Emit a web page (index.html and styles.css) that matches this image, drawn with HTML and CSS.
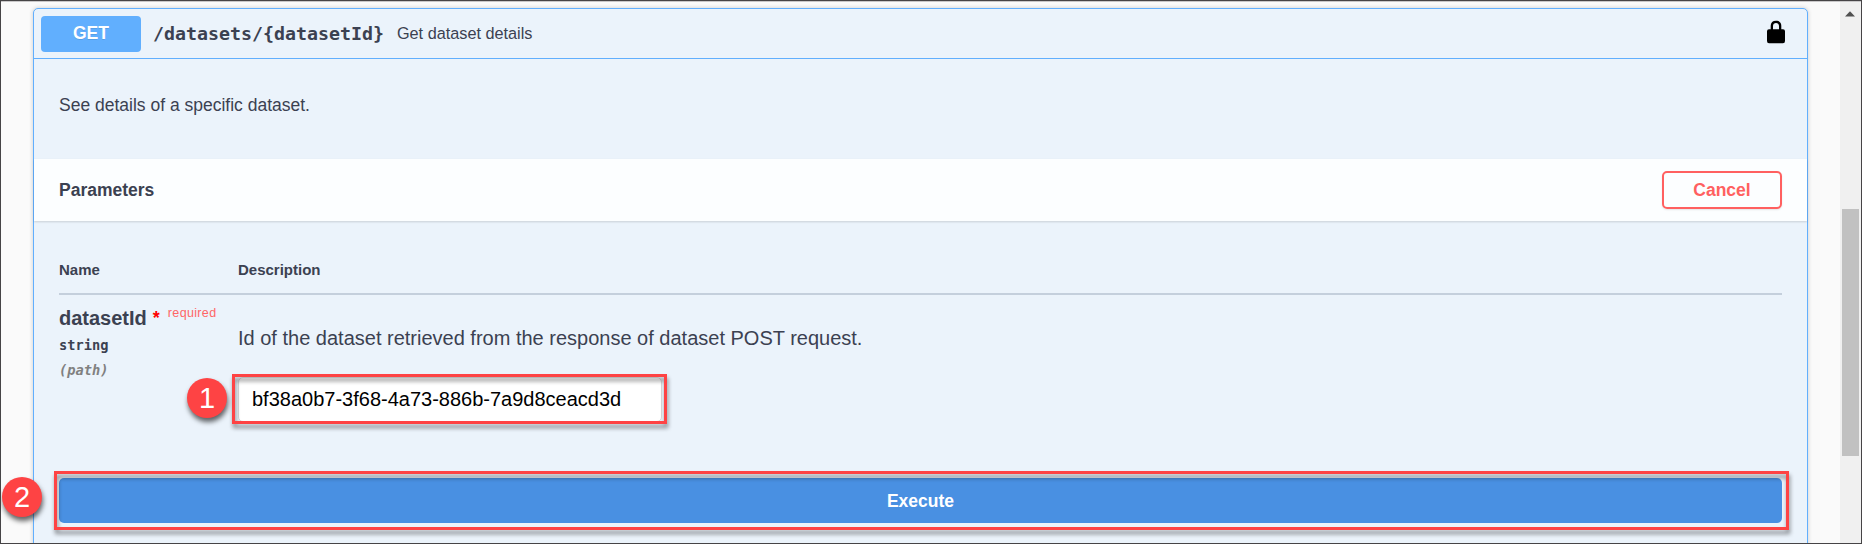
FILE: index.html
```html
<!DOCTYPE html>
<html lang="en">
<head>
<meta charset="utf-8">
<title>Get dataset details</title>
<link rel="stylesheet" href="styles.css">
</head>
<body>
<div class="window">
  <main class="content">
    <section class="opblock">
      <header class="summary">
        <span class="method">GET</span>
        <span class="path">/datasets/{datasetId}</span>
        <span class="summary-text">Get dataset details</span>
        <svg class="lock" width="20" height="24" viewBox="0 0 20 24"><path d="M1 11.2Q1 9.3 3 9.3H4.700V5.800C4.700 2.500 6.700 .700 10 .700S15.300 2.500 15.300 5.800V9.300H17Q19 9.300 19 11.200V21Q19 23.200 17 23.200H3Q1 23.200 1 21ZM7 9.300H13V6C13 4 11.700 3 10 3S7 4 7 6Z"/></svg>
      </header>
      <p class="description">See details of a specific dataset.</p>
      <div class="section-header">
        <h4 class="section-title">Parameters</h4>
        <button class="cancel">Cancel</button>
      </div>
      <div class="parameters">
        <div class="row head"><span>Name</span><span>Description</span></div>
        <div class="row">
          <div class="param">
            <div class="param-name">datasetId<span class="star">*</span><span class="required">required</span></div>
            <div class="param-type">string</div>
            <div class="param-in">(path)</div>
          </div>
          <div class="param-desc">
            <p class="param-text">Id of the dataset retrieved from the response of dataset POST request.</p>
            <div class="field">
              <div class="input">bf38a0b7-3f68-4a73-886b-7a9d8ceacd3d</div>
              <span class="outline outline-field"></span>
              <span class="badge badge-one">1</span>
            </div>
          </div>
        </div>
      </div>
      <div class="execute-wrap">
        <button class="execute">Execute</button>
        <span class="outline outline-execute"></span>
        <span class="badge badge-two">2</span>
      </div>
    </section>
  </main>
  <aside class="scrollbar">
    <svg class="arrow" width="10" height="6" viewBox="0 0 10 6"><path d="M0 5.500L5 .300L10 5.500Z"/></svg>
    <div class="thumb"></div>
  </aside>
</div>
</body>
</html>
```
FILE: styles.css
```css
* { box-sizing: border-box; }
body { margin: 0; font-family: "Liberation Sans", Arial, sans-serif; color: #3b4151; }
.window { display: flex; width: 1862px; height: 544px; border: 1px solid #464446; background: #fafafa; overflow: hidden; box-shadow: inset 0 1px 0 #c9c8c9; }
.content { flex: 1; padding: 7px 32px 0; }
.opblock { height: 600px; border: 1px solid #61affe; border-radius: 5px; background: #ebf3fb; box-shadow: 0 0 4px rgba(0,0,0,.19); }
.summary { display: flex; align-items: center; height: 50px; padding: 0 21px 0 7px; border-bottom: 1px solid #61affe; }
.method { width: 100px; height: 36px; border-radius: 4px; background: #61affe; color: #fff; font-size: 17.5px; font-weight: 700; line-height: 34px; text-align: center; text-shadow: 0 1px 0 rgba(0,0,0,.1); }
.path { margin-left: 12px; font: 700 18.27px/24px "DejaVu Sans Mono", monospace; }
.summary-text { flex: 1; margin-left: 13px; padding-bottom: 2px; font-size: 16.25px; line-height: 20px; }
.lock { margin-bottom: 4px; }
.description { height: 100px; margin: 0; padding: 35px 25px; font-size: 17.5px; line-height: 22px; }
.section-header { display: flex; align-items: center; justify-content: space-between; height: 62px; padding: 0 25px; background: rgba(255,255,255,.85); box-shadow: 0 1px 2px rgba(0,0,0,.15); }
.section-title { margin: 0; font-size: 17.5px; }
.cancel { width: 120px; height: 38px; padding: 0; border: 2px solid #ff6060; border-radius: 5px; background: transparent; box-shadow: 0 1px 2px rgba(0,0,0,.1); color: #ff6060; font: 700 17.5px "Liberation Sans", sans-serif; }
.parameters { height: 257px; padding: 25px 25px 0; }
.row { display: grid; grid-template-columns: 179px 1fr; }
.head { height: 49px; padding: 14px 0 0; border-bottom: 2px solid #c4cfdc; font-size: 15px; font-weight: 700; line-height: 19px; }
.param { padding: 11px 0 0; }
.param-name { display: flex; height: 26px; font-size: 20px; font-weight: 700; line-height: 25px; }
.star { width: 8px; margin-left: 6px; color: #f00; font-size: 18px; }
.required { margin-left: 7px; color: #ff6666; font-size: 12.5px; font-weight: 400; line-height: 14px; letter-spacing: .35px; }
.param-type, .param-in { font: 700 13.7px/24px "DejaVu Sans Mono", monospace; }
.param-type { height: 26px; padding-top: 1px; }
.param-in { color: #808080; font-style: italic; }
.param-desc { padding-top: 30px; }
.param-text { height: 52px; margin: 0; font-size: 20px; line-height: 26px; }
.field { position: relative; width: 424px; height: 45px; }
.input { width: 424px; height: 45px; padding-left: 13px; border: 1px solid #d9d9d9; border-radius: 5px; background: #fff; color: #000; font-size: 20px; line-height: 43px; }
.outline { position: absolute; border: 3px solid #fe4344; filter: drop-shadow(1px 4px 2px rgba(0,0,0,.45)); }
.outline-field { left: -6px; top: -3px; width: 435px; height: 50px; }
.outline-execute { left: 20px; top: -7px; width: 1735px; height: 59px; }
.badge { position: absolute; width: 40px; height: 40px; border-radius: 50%; background: #fe4344; box-shadow: 1px 4px 5px rgba(0,0,0,.6); color: #fff; font-size: 29px; line-height: 41px; text-align: center; }
.badge-one { left: -51px; top: 1px; }
.badge-two { left: -32px; top: -1px; }
.execute-wrap { position: relative; padding: 0 25px; }
.execute { display: block; width: 100%; height: 45px; padding: 2px 0 0; border: 0; border-radius: 5px; background: #4990e2; color: #fff; font: 700 17.5px "Liberation Sans", sans-serif; }
.scrollbar { width: 21px; margin-top: 1px; padding: 9px 2px 0; background: #f0f0f0; }
.arrow { display: block; margin-left: 3px; fill: #505050; }
.thumb { width: 17px; height: 247px; margin-top: 192px; background: #c1c1c1; }
```
